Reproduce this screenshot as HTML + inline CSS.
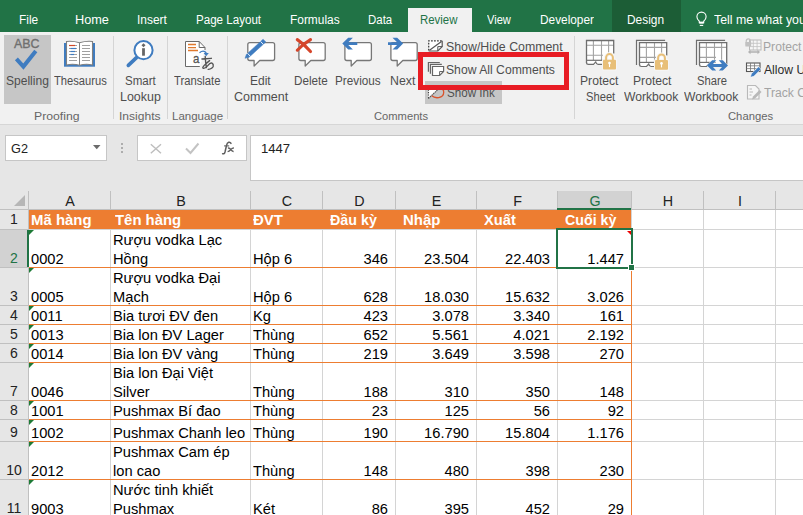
<!DOCTYPE html>
<html><head><meta charset="utf-8"><style>
html,body{margin:0;padding:0}
body{width:803px;height:515px;overflow:hidden;position:relative;background:#fff;font-family:"Liberation Sans",sans-serif}
.t{position:absolute;white-space:nowrap}
.r{position:absolute;box-sizing:content-box}
</style></head><body>
<div class="r" style="left:0px;top:0px;width:803px;height:32px;background:#217346;"></div>
<div class="r" style="left:612px;top:0px;width:69px;height:32px;background:#1c5d36;"></div>
<div class="r" style="left:408px;top:8px;width:64px;height:24px;background:#f1f1f1;"></div>
<div class="t" style="left:19.45px;top:12.27px;font-size:12.5px;line-height:16px;color:#ffffff;font-weight:normal;transform:scaleX(0.9535);transform-origin:0 0;">File</div>
<div class="t" style="left:75.48px;top:12.27px;font-size:12.5px;line-height:16px;color:#ffffff;font-weight:normal;transform:scaleX(1.0173);transform-origin:0 0;">Home</div>
<div class="t" style="left:137.13px;top:12.27px;font-size:12.5px;line-height:16px;color:#ffffff;font-weight:normal;transform:scaleX(0.9547);transform-origin:0 0;">Insert</div>
<div class="t" style="left:195.57px;top:12.27px;font-size:12.5px;line-height:16px;color:#ffffff;font-weight:normal;transform:scaleX(0.9273);transform-origin:0 0;">Page Layout</div>
<div class="t" style="left:289.75px;top:12.27px;font-size:12.5px;line-height:16px;color:#ffffff;font-weight:normal;transform:scaleX(0.9529);transform-origin:0 0;">Formulas</div>
<div class="t" style="left:367.68px;top:12.27px;font-size:12.5px;line-height:16px;color:#ffffff;font-weight:normal;transform:scaleX(0.9182);transform-origin:0 0;">Data</div>
<div class="t" style="left:487.14px;top:12.27px;font-size:12.5px;line-height:16px;color:#ffffff;font-weight:normal;transform:scaleX(0.8876);transform-origin:0 0;">View</div>
<div class="t" style="left:540.25px;top:12.27px;font-size:12.5px;line-height:16px;color:#ffffff;font-weight:normal;transform:scaleX(0.9471);transform-origin:0 0;">Developer</div>
<div class="t" style="left:627.45px;top:12.27px;font-size:12.5px;line-height:16px;color:#ffffff;font-weight:normal;transform:scaleX(0.9524);transform-origin:0 0;">Design</div>
<div class="t" style="left:420.49px;top:12.17px;font-size:12.5px;line-height:16px;color:#217346;font-weight:normal;transform:scaleX(0.9125);transform-origin:0 0;">Review</div>
<div class="t" style="left:713.55px;top:12.17px;font-size:12.5px;line-height:16px;color:#ffffff;font-weight:normal;transform:scaleX(0.9859);transform-origin:0 0;">Tell me what you</div>
<div class="r" style="left:0px;top:32px;width:803px;height:93px;background:#f1f1f1;"></div>
<div class="r" style="left:0px;top:124px;width:803px;height:1px;background:#d6d6d6;"></div>
<div class="r" style="left:113px;top:36px;width:1px;height:83px;background:#d5d5d5;"></div>
<div class="r" style="left:167px;top:36px;width:1px;height:83px;background:#d5d5d5;"></div>
<div class="r" style="left:227px;top:36px;width:1px;height:83px;background:#d5d5d5;"></div>
<div class="r" style="left:574px;top:36px;width:1px;height:83px;background:#d5d5d5;"></div>
<div class="r" style="left:4px;top:35px;width:47px;height:69px;background:#c6c6c6;"></div>
<div class="r" style="left:425px;top:81px;width:77px;height:23px;background:#c6c6c6;"></div>
<div class="t" style="left:5.56px;top:72.67px;font-size:12.5px;line-height:16px;color:#4e4e4e;font-weight:normal;transform:scaleX(0.9637);transform-origin:0 0;">Spelling</div>
<div class="t" style="left:53.58px;top:72.67px;font-size:12.5px;line-height:16px;color:#4e4e4e;font-weight:normal;transform:scaleX(0.8942);transform-origin:0 0;">Thesaurus</div>
<div class="t" style="left:124.78px;top:72.67px;font-size:12.5px;line-height:16px;color:#4e4e4e;font-weight:normal;transform:scaleX(0.9239);transform-origin:0 0;">Smart</div>
<div class="t" style="left:119.51px;top:88.67px;font-size:12.5px;line-height:16px;color:#4e4e4e;font-weight:normal;transform:scaleX(0.9949);transform-origin:0 0;">Lookup</div>
<div class="t" style="left:174.28px;top:72.67px;font-size:12.5px;line-height:16px;color:#4e4e4e;font-weight:normal;transform:scaleX(0.8994);transform-origin:0 0;">Translate</div>
<div class="t" style="left:250.44px;top:72.67px;font-size:12.5px;line-height:16px;color:#4e4e4e;font-weight:normal;transform:scaleX(0.9590);transform-origin:0 0;">Edit</div>
<div class="t" style="left:233.57px;top:88.67px;font-size:12.5px;line-height:16px;color:#4e4e4e;font-weight:normal;transform:scaleX(1.0012);transform-origin:0 0;">Comment</div>
<div class="t" style="left:294.47px;top:72.67px;font-size:12.5px;line-height:16px;color:#4e4e4e;font-weight:normal;transform:scaleX(0.9345);transform-origin:0 0;">Delete</div>
<div class="t" style="left:334.56px;top:72.67px;font-size:12.5px;line-height:16px;color:#4e4e4e;font-weight:normal;transform:scaleX(0.9388);transform-origin:0 0;">Previous</div>
<div class="t" style="left:390.41px;top:72.67px;font-size:12.5px;line-height:16px;color:#4e4e4e;font-weight:normal;transform:scaleX(0.9868);transform-origin:0 0;">Next</div>
<div class="t" style="left:446.44px;top:38.67px;font-size:12.5px;line-height:16px;color:#4e4e4e;font-weight:normal;transform:scaleX(0.9878);transform-origin:0 0;">Show/Hide Comment</div>
<div class="t" style="left:446.45px;top:61.67px;font-size:12.5px;line-height:16px;color:#4e4e4e;font-weight:normal;transform:scaleX(0.9741);transform-origin:0 0;">Show All Comments</div>
<div class="t" style="left:446.88px;top:84.67px;font-size:12.5px;line-height:16px;color:#505050;font-weight:normal;transform:scaleX(0.9297);transform-origin:0 0;">Show Ink</div>
<div class="t" style="left:580.43px;top:72.67px;font-size:12.5px;line-height:16px;color:#4e4e4e;font-weight:normal;transform:scaleX(0.9714);transform-origin:0 0;">Protect</div>
<div class="t" style="left:585.70px;top:88.67px;font-size:12.5px;line-height:16px;color:#4e4e4e;font-weight:normal;transform:scaleX(0.8937);transform-origin:0 0;">Sheet</div>
<div class="t" style="left:632.63px;top:72.67px;font-size:12.5px;line-height:16px;color:#4e4e4e;font-weight:normal;transform:scaleX(0.9714);transform-origin:0 0;">Protect</div>
<div class="t" style="left:624.34px;top:88.67px;font-size:12.5px;line-height:16px;color:#4e4e4e;font-weight:normal;transform:scaleX(0.9714);transform-origin:0 0;">Workbook</div>
<div class="t" style="left:696.89px;top:72.67px;font-size:12.5px;line-height:16px;color:#4e4e4e;font-weight:normal;transform:scaleX(0.8979);transform-origin:0 0;">Share</div>
<div class="t" style="left:684.44px;top:88.67px;font-size:12.5px;line-height:16px;color:#4e4e4e;font-weight:normal;transform:scaleX(0.9714);transform-origin:0 0;">Workbook</div>
<div class="t" style="left:763.43px;top:38.67px;font-size:12.5px;line-height:16px;color:#a3a3a3;font-weight:normal;transform:scaleX(0.9714);transform-origin:0 0;">Protect and Share Workbook</div>
<div class="t" style="left:764.40px;top:61.67px;font-size:12.5px;line-height:16px;color:#2b2b2b;font-weight:normal;transform:scaleX(0.9714);transform-origin:0 0;">Allow Users to Edit Ranges</div>
<div class="t" style="left:764.16px;top:84.67px;font-size:12.5px;line-height:16px;color:#a3a3a3;font-weight:normal;transform:scaleX(0.9714);transform-origin:0 0;">Track Changes</div>
<div class="t" style="left:33.82px;top:108.52px;font-size:11.5px;line-height:14px;color:#666666;font-weight:normal;transform:scaleX(1.0639);transform-origin:0 0;">Proofing</div>
<div class="t" style="left:118.92px;top:108.52px;font-size:11.5px;line-height:14px;color:#666666;font-weight:normal;transform:scaleX(1.0477);transform-origin:0 0;">Insights</div>
<div class="t" style="left:171.78px;top:108.52px;font-size:11.5px;line-height:14px;color:#666666;font-weight:normal;transform:scaleX(0.9992);transform-origin:0 0;">Language</div>
<div class="t" style="left:373.64px;top:108.52px;font-size:11.5px;line-height:14px;color:#666666;font-weight:normal;transform:scaleX(0.9721);transform-origin:0 0;">Comments</div>
<div class="t" style="left:728.14px;top:108.52px;font-size:11.5px;line-height:14px;color:#666666;font-weight:normal;transform:scaleX(0.9783);transform-origin:0 0;">Changes</div>
<div class="t" style="left:14.25px;top:35.67px;font-size:12.5px;line-height:16px;color:#6f6f6f;font-weight:normal;transform:scaleX(0.9921);transform-origin:0 0;-webkit-text-stroke:0.35px #6f6f6f">ABC</div>
<svg class="r" style="left:0;top:0" width="803" height="124" viewBox="0 0 803 124"><polyline points="16.4,58.9 23.4,66.6 35.8,51.1" fill="none" stroke="#3f7cc0" stroke-width="4"/><rect x="64" y="43" width="31" height="23.7" fill="#3f7cc0"/><path d="M66.5,65 V41.5 Q73,40.8 79.5,42.8 Q86,40.8 92.5,41.5 V65 Q86,63.5 79.5,65.3 Q73,63.5 66.5,65 Z" fill="#fff" stroke="#808080" stroke-width="1.1"/><line x1="79.5" y1="42.8" x2="79.5" y2="65" stroke="#808080" stroke-width="1"/><line x1="69" y1="45.5" x2="77" y2="45.5" stroke="#a0a0a0" stroke-width="1"/><line x1="82" y1="45.5" x2="90" y2="45.5" stroke="#a0a0a0" stroke-width="1"/><line x1="69" y1="48.5" x2="77" y2="48.5" stroke="#a0a0a0" stroke-width="1"/><line x1="82" y1="48.5" x2="90" y2="48.5" stroke="#a0a0a0" stroke-width="1"/><line x1="69" y1="51.5" x2="77" y2="51.5" stroke="#a0a0a0" stroke-width="1"/><line x1="82" y1="51.5" x2="90" y2="51.5" stroke="#a0a0a0" stroke-width="1"/><line x1="69" y1="54.5" x2="77" y2="54.5" stroke="#a0a0a0" stroke-width="1"/><line x1="82" y1="54.5" x2="90" y2="54.5" stroke="#a0a0a0" stroke-width="1"/><line x1="69" y1="57.5" x2="77" y2="57.5" stroke="#a0a0a0" stroke-width="1"/><line x1="82" y1="57.5" x2="90" y2="57.5" stroke="#a0a0a0" stroke-width="1"/><line x1="69" y1="60.5" x2="77" y2="60.5" stroke="#a0a0a0" stroke-width="1"/><line x1="82" y1="60.5" x2="90" y2="60.5" stroke="#a0a0a0" stroke-width="1"/><line x1="69" y1="45.5" x2="75" y2="45.5" stroke="#d24726" stroke-width="1.2"/><line x1="70.5" y1="48.5" x2="76" y2="48.5" stroke="#3f7cc0" stroke-width="1.2"/><line x1="70.5" y1="51.5" x2="75" y2="51.5" stroke="#3f7cc0" stroke-width="1.2"/><line x1="70.5" y1="54.5" x2="74" y2="54.5" stroke="#3f7cc0" stroke-width="1.2"/><line x1="128.3" y1="65.4" x2="136.5" y2="57.6" stroke="#3f7cc0" stroke-width="3.6" stroke-linecap="round"/><circle cx="143.5" cy="50.2" r="9.1" fill="#fff" stroke="#3f7cc0" stroke-width="2"/><rect x="142.1" y="43.8" width="2.8" height="2.8" fill="#666" transform="rotate(45 143.5 45.2)"/><rect x="142.1" y="48.2" width="2.8" height="7.5" fill="#666"/><path d="M199.8,66.5 H185.5 V41.5 H199.2 L205,47.5 V50" fill="#fff" stroke="#6a6a6a" stroke-width="1"/><path d="M199.2,41.5 V47.5 H205" fill="none" stroke="#6a6a6a" stroke-width="1"/><path d="M188,44.5 H196 M188,47.6 H196 M188,50.5 H198" stroke="#e07a2e" stroke-width="1.3"/><path d="M199.5,52.8 Q203.5,49.5 206.3,53" fill="none" stroke="#3f7cc0" stroke-width="1.3"/><path d="M203.6,53.1 H208.8 L206.2,56.2 Z" fill="#3f7cc0"/><path d="M201.9,59 L211.4,58.3 M205.2,56.4 Q205.5,62 206.4,67.6 M209.6,60.6 Q206.5,63 204,65.6 Q201.9,68 203.3,68.4 Q205.3,68.8 208,65.3 Q210.2,62.4 212,63.1 Q213.7,64 213.2,66.4 Q212.5,68.7 208.2,69.4" fill="none" stroke="#555" stroke-width="1.35" stroke-linecap="round"/><path d="M259.70000000000005,60.5 H272.6 Q274.6,60.5 274.6,58.5 V44.6 Q274.6,42.6 272.6,42.6 H249.8 Q247.8,42.6 247.8,44.6 V58.5 Q247.8,60.5 249.8,60.5 H254.10000000000002 V66 Z" fill="#fff" stroke="#777777" stroke-width="1.3" stroke-linejoin="round"/><path d="M245.0,58.3 L246.4,54.4 L263.1,39.2 L265.8,42.0 L249.1,57.2 Z" fill="#3f7cc0" stroke="#3f7cc0" stroke-width="0.5" stroke-linejoin="round"/><path d="M247.5,53.3 L250.3,56.3 M260.6,41.5 L263.4,44.5" stroke="#fff" stroke-width="0.9"/><path d="M310.8,60.5 H323.2 Q325.2,60.5 325.2,58.5 V44.6 Q325.2,42.6 323.2,42.6 H300.9 Q298.9,42.6 298.9,44.6 V58.5 Q298.9,60.5 300.9,60.5 H305.2 V66 Z" fill="#fff" stroke="#777777" stroke-width="1.3" stroke-linejoin="round"/><path d="M297.3,39.6 Q304,44 310.5,51.5 M297.3,50.2 Q303,44 310.5,39.6" fill="none" stroke="#d5452a" stroke-width="3.1" stroke-linecap="round"/><path d="M356.8,60.5 H369.4 Q371.4,60.5 371.4,58.5 V44.6 Q371.4,42.6 369.4,42.6 H346.9 Q344.9,42.6 344.9,44.6 V58.5 Q344.9,60.5 346.9,60.5 H351.2 V66 Z" fill="#fff" stroke="#777777" stroke-width="1.3" stroke-linejoin="round"/><path d="M342.3,43.6 L348.2,37.7 H352.9 L348.3,42.3 H357.3 V44.9 H348.3 L352.9,49.5 H348.2 Z" fill="#3f7cc0"/><path d="M402.8,60.5 H415.2 Q417.2,60.5 417.2,58.5 V44.6 Q417.2,42.6 415.2,42.6 H392.9 Q390.9,42.6 390.9,44.6 V58.5 Q390.9,60.5 392.9,60.5 H397.2 V66 Z" fill="#fff" stroke="#777777" stroke-width="1.3" stroke-linejoin="round"/><path d="M403.1,43.6 L397.2,37.7 H392.5 L397.1,42.3 H388 V44.9 H397.1 L392.5,49.5 H397.2 Z" fill="#3f7cc0"/><path d="M428.7,51 V40.8 H442.2 V46.6 L437.8,51 Z" fill="#fff"/><path d="M428.7,50.5 V40.8 H442" fill="none" stroke="#444" stroke-width="1.3" stroke-dasharray="1.8,1.2"/><path d="M428.7,51 H437.8 L442.2,46.6 V40.8" fill="none" stroke="#555" stroke-width="1.2"/><path d="M429.5,50.3 L441.5,41.5" stroke="#555" stroke-width="1.2"/><path d="M437.8,51 V46.6 H442.2" fill="none" stroke="#555" stroke-width="1"/><path d="M428.4,71.8 V62.5 H439.8 M430.4,73.7 V64.4 H441.8" fill="none" stroke="#666" stroke-width="1.2"/><path d="M432.5,75.5 V66.5 H443.6 V71.5 L439.6,75.5 Z" fill="#fff" stroke="#666" stroke-width="1.2"/><path d="M439.6,75.5 V71.5 H443.6" fill="none" stroke="#666" stroke-width="1"/><path d="M428.5,98.5 L438,89.5 H428.5 Z" fill="#fff"/><path d="M428.5,98 V89.5" stroke="#444" stroke-width="1.1" stroke-dasharray="1.1,1.3"/><path d="M428.3,98.6 L438.5,89" stroke="#555" stroke-width="1.1" stroke-dasharray="1.6,0.6"/><path d="M431.8,95.8 Q434.5,98.3 438.8,97.6 Q443.6,96.6 443.7,92.5 Q443.8,88.5 440,88" fill="none" stroke="#d9542c" stroke-width="1.3"/><rect x="586.5" y="40.5" width="27.2" height="24" fill="#fff"/><path d="M586.5,45.3 H613.7 M586.5,55.3 H603.0 M593.4,40.5 V60.3 M601.5,40.5 V60.3 M608.6,40.5 V53.5" stroke="#a3a3a3" stroke-width="1.1"/><path d="M586.5,60.3 H602.5" stroke="#6e6e6e" stroke-width="1.2"/><path d="M586.5,63.0 V40.5 H613.7 V53.5" fill="none" stroke="#6e6e6e" stroke-width="1.3"/><path d="M586.5,62.5 Q586.5,64.4 588.5,64.4 H593.5 L595.7,61.9 Q596.3,64.4 598.0,64.4 H602.5" fill="none" stroke="#6e6e6e" stroke-width="1.2"/><path d="M606.1,60.8 V57.5 A3.4,3.4 0 0 1 612.9,57.5 V60.8" fill="none" stroke="#f6f6f6" stroke-width="4"/><rect x="602" y="58.8" width="15.0" height="11.6" rx="1.5" fill="#f6f6f6"/><path d="M606.1,60.8 V57.5 A3.4,3.4 0 0 1 612.9,57.5 V60.8" fill="none" stroke="#e8bf78" stroke-width="2"/><rect x="603" y="59.8" width="13.0" height="9.6" rx="1" fill="#e8bf78"/><circle cx="609.5" cy="63.099999999999994" r="1.35" fill="#fff"/><rect x="608.95" y="63.3" width="1.1" height="3.8" fill="#fff"/><path d="M636.5,64.9 V40.4 H665.1" fill="none" stroke="#6e6e6e" stroke-width="1.2"/><rect x="639.5" y="42.6" width="27.2" height="24" fill="#fff"/><path d="M639.5,47.4 H666.7 M639.5,57.400000000000006 H656.0 M646.4,42.6 V62.400000000000006 M654.5,42.6 V62.400000000000006 M661.6,42.6 V55.6" stroke="#a3a3a3" stroke-width="1.1"/><path d="M639.5,62.400000000000006 H655.5" stroke="#6e6e6e" stroke-width="1.2"/><path d="M639.5,65.1 V42.6 H666.7 V55.6" fill="none" stroke="#6e6e6e" stroke-width="1.3"/><path d="M639.5,64.6 Q639.5,66.5 641.5,66.5 H646.5 L648.7,64.0 Q649.3,66.5 651.0,66.5 H655.5" fill="none" stroke="#6e6e6e" stroke-width="1.2"/><path d="M658.1,61.1 V57.800000000000004 A3.4,3.4 0 0 1 664.9,57.800000000000004 V61.1" fill="none" stroke="#f6f6f6" stroke-width="4"/><rect x="654" y="59.1" width="15.0" height="11.6" rx="1.5" fill="#f6f6f6"/><path d="M658.1,61.1 V57.800000000000004 A3.4,3.4 0 0 1 664.9,57.800000000000004 V61.1" fill="none" stroke="#e8bf78" stroke-width="2"/><rect x="655" y="60.1" width="13.0" height="9.6" rx="1" fill="#e8bf78"/><circle cx="661.5" cy="63.4" r="1.35" fill="#fff"/><rect x="660.95" y="63.6" width="1.1" height="3.8" fill="#fff"/><path d="M696.5,64.9 V40.4 H725.1" fill="none" stroke="#6e6e6e" stroke-width="1.2"/><rect x="699.5" y="42.6" width="27.2" height="24" fill="#fff"/><path d="M699.5,47.4 H726.7 M699.5,57.400000000000006 H716.0 M706.4,42.6 V62.400000000000006 M714.5,42.6 V62.400000000000006 M721.6,42.6 V64.6" stroke="#a3a3a3" stroke-width="1.1"/><path d="M699.5,62.400000000000006 H715.5" stroke="#6e6e6e" stroke-width="1.2"/><path d="M699.5,65.1 V42.6 H726.7 V64.6" fill="none" stroke="#6e6e6e" stroke-width="1.3"/><path d="M699.5,64.6 Q699.5,66.5 701.5,66.5 H706.5 L708.7,64.0 Q709.3,66.5 711.0,66.5 H715.5" fill="none" stroke="#6e6e6e" stroke-width="1.2"/><path d="M707,65.4 L712.2,60.2 H716.2 L713,63.9 H722 L718.8,60.2 H722.8 L728,65.4 L722.8,70.4 H718.8 L722,66.9 H713 L716.2,70.4 H712.2 Z" fill="#3f7cc0" stroke="#f6f6f6" stroke-width="0.8" paint-order="stroke"/><g opacity="0.45"><rect x="749.5" y="40" width="11.5" height="10" fill="#fff" stroke="#777" stroke-width="1"/><path d="M749.5,43.3 H761 M749.5,46.6 H761 M753.3,40 V50 M757.1,40 V50" stroke="#888" stroke-width="0.8"/><path d="M746.2,45.5 V41.5 Q746.2,38.8 748.3,38.8 Q750.4,38.8 750.4,41.5 V45.5" fill="none" stroke="#888" stroke-width="1.2"/><rect x="745.4" y="42" width="5.8" height="4.5" fill="#888"/><path d="M748,52 L750.5,49.7 V51.2 H757.5 V49.7 L760,52 L757.5,54.3 V52.8 H750.5 V54.3 Z" fill="#666"/></g><rect x="746.5" y="63" width="13.5" height="8.5" fill="#fff" stroke="#555" stroke-width="1.1"/><path d="M746.5,65.8 H760 M746.5,68.6 H760 M750.5,63 V71.5 M754.5,63 V71.5" stroke="#777" stroke-width="0.8"/><path d="M750.3,77.3 L751.4,73.8 L758.5,66.7 L761,69.2 L753.9,76.3 Z" fill="#3f7cc0" stroke="#fff" stroke-width="0.6"/><g opacity="0.4"><path d="M747.5,85.5 H755.5 L759,89 V99 H747.5 Z" fill="#fff" stroke="#666" stroke-width="1.1"/><path d="M749.5,89 H752 M749.5,92 H753 M749.5,95 H751.5" stroke="#666" stroke-width="1"/><path d="M752,99.5 L753,96.5 L759.5,90 L761.5,92 L755,98.5 Z" fill="#666"/></g><path d="M699.3,21.2 Q696.9,19.3 696.9,16.7 A4.6,4.6 0 0 1 706.1,16.7 Q706.1,19.3 703.7,21.2 V22.8 H699.3 Z" fill="none" stroke="#fff" stroke-width="1.1"/><rect x="699.3" y="21.6" width="4.4" height="2" fill="#fff"/><path d="M699.8,25.4 H703.2" stroke="#fff" stroke-width="1.1"/></svg>
<div class="t" style="left:193.44px;top:50.02px;font-size:13.5px;line-height:17px;color:#555;font-weight:normal;transform:scaleX(0.8486);transform-origin:0 0;-webkit-text-stroke:0.3px #555">a</div>
<div class="r" style="left:418px;top:52px;width:141px;height:28px;border:5px solid #e81c24;"></div>
<div class="r" style="left:0px;top:125px;width:803px;height:66px;background:#e6e6e6;"></div>
<div class="r" style="left:5px;top:135px;width:100px;height:24px;background:#fff;border:1px solid #c6c6c6"></div>
<div class="t" style="left:11.46px;top:140.67px;font-size:12.5px;line-height:16px;color:#222;font-weight:normal;transform:scaleX(1.0170);transform-origin:0 0;">G2</div>
<svg class="r" style="left:93px;top:145px" width="8" height="5"><path d="M0 0H7.5L3.75 4.2Z" fill="#6b6b6b"/></svg>
<div class="r" style="left:121px;top:142.8px;width:2px;height:2px;background:#9a9a9a;border-radius:1px"></div>
<div class="r" style="left:121px;top:146.8px;width:2px;height:2px;background:#9a9a9a;border-radius:1px"></div>
<div class="r" style="left:121px;top:150.8px;width:2px;height:2px;background:#9a9a9a;border-radius:1px"></div>
<div class="r" style="left:137px;top:135px;width:108px;height:24px;background:#fff;border:1px solid #c6c6c6"></div>
<svg class="r" style="left:0;top:124px" width="803" height="60" viewBox="0 124 803 60"><path d="M150.8,144.2 L161,153.2 M161,144.2 L150.8,153.2" stroke="#bdbdbd" stroke-width="1.4"/><path d="M186,148.5 L190.5,153 L198.5,143.5" stroke="#c3c3c3" stroke-width="2" fill="none"/></svg>
<svg class="r" style="left:0;top:124px" width="803" height="60" viewBox="0 124 803 60"><path d="M231,143.4 Q230.3,141.9 228.7,142.2 Q227.1,142.6 226.5,145.5 L225,152 Q224.4,154.2 222.6,153.7" stroke="#5e5e5e" stroke-width="1.5" fill="none" stroke-linecap="round"/><path d="M224.1,145.9 H229.2" stroke="#5e5e5e" stroke-width="1.1"/><path d="M227.9,148 Q229.8,147.8 230.9,149.7 Q232,151.6 233.6,151.5 M234,147.9 Q232.2,148 230.6,149.8 Q229.1,151.5 227.6,151.7" stroke="#5e5e5e" stroke-width="1.3" fill="none"/></svg>
<div class="r" style="left:250px;top:135px;width:560px;height:44px;background:#fff;border:1px solid #c6c6c6"></div>
<div class="t" style="left:261.32px;top:140.67px;font-size:12.5px;line-height:16px;color:#222;font-weight:normal;transform:scaleX(1.0476);transform-origin:0 0;">1447</div>
<div class="r" style="left:0px;top:191px;width:803px;height:18px;background:#e6e6e6;"></div>
<div class="r" style="left:557px;top:191px;width:74px;height:18px;background:#d2d2d2;"></div>
<div class="r" style="left:0px;top:209px;width:28px;height:306px;background:#e6e6e6;"></div>
<div class="r" style="left:0px;top:230px;width:28px;height:37px;background:#d2d2d2;"></div>
<div class="r" style="left:29px;top:210px;width:803px;height:305px;background:#ffffff;"></div>
<div class="r" style="left:110px;top:209px;width:1px;height:306px;background:#d4d4d4;"></div>
<div class="r" style="left:250px;top:209px;width:1px;height:306px;background:#d4d4d4;"></div>
<div class="r" style="left:322px;top:209px;width:1px;height:306px;background:#d4d4d4;"></div>
<div class="r" style="left:395px;top:209px;width:1px;height:306px;background:#d4d4d4;"></div>
<div class="r" style="left:476px;top:209px;width:1px;height:306px;background:#d4d4d4;"></div>
<div class="r" style="left:557px;top:209px;width:1px;height:306px;background:#d4d4d4;"></div>
<div class="r" style="left:631px;top:209px;width:1px;height:306px;background:#d4d4d4;"></div>
<div class="r" style="left:703px;top:209px;width:1px;height:306px;background:#d4d4d4;"></div>
<div class="r" style="left:775px;top:209px;width:1px;height:306px;background:#d4d4d4;"></div>
<div class="r" style="left:850px;top:209px;width:1px;height:306px;background:#d4d4d4;"></div>
<div class="r" style="left:28px;top:191px;width:1px;height:18px;background:#c0c0c0;"></div>
<div class="r" style="left:110px;top:191px;width:1px;height:18px;background:#c0c0c0;"></div>
<div class="r" style="left:250px;top:191px;width:1px;height:18px;background:#c0c0c0;"></div>
<div class="r" style="left:322px;top:191px;width:1px;height:18px;background:#c0c0c0;"></div>
<div class="r" style="left:395px;top:191px;width:1px;height:18px;background:#c0c0c0;"></div>
<div class="r" style="left:476px;top:191px;width:1px;height:18px;background:#c0c0c0;"></div>
<div class="r" style="left:557px;top:191px;width:1px;height:18px;background:#c0c0c0;"></div>
<div class="r" style="left:631px;top:191px;width:1px;height:18px;background:#c0c0c0;"></div>
<div class="r" style="left:703px;top:191px;width:1px;height:18px;background:#c0c0c0;"></div>
<div class="r" style="left:775px;top:191px;width:1px;height:18px;background:#c0c0c0;"></div>
<div class="r" style="left:850px;top:191px;width:1px;height:18px;background:#c0c0c0;"></div>
<div class="r" style="left:28px;top:191px;width:1px;height:324px;background:#c0c0c0;"></div>
<div class="r" style="left:29px;top:229px;width:803px;height:1px;background:#d4d4d4;"></div>
<div class="r" style="left:29px;top:267px;width:803px;height:1px;background:#d4d4d4;"></div>
<div class="r" style="left:29px;top:305px;width:803px;height:1px;background:#d4d4d4;"></div>
<div class="r" style="left:29px;top:324px;width:803px;height:1px;background:#d4d4d4;"></div>
<div class="r" style="left:29px;top:343px;width:803px;height:1px;background:#d4d4d4;"></div>
<div class="r" style="left:29px;top:362px;width:803px;height:1px;background:#d4d4d4;"></div>
<div class="r" style="left:29px;top:400px;width:803px;height:1px;background:#d4d4d4;"></div>
<div class="r" style="left:29px;top:419px;width:803px;height:1px;background:#d4d4d4;"></div>
<div class="r" style="left:29px;top:441px;width:803px;height:1px;background:#d4d4d4;"></div>
<div class="r" style="left:29px;top:479px;width:803px;height:1px;background:#d4d4d4;"></div>
<div class="r" style="left:29px;top:517px;width:803px;height:1px;background:#d4d4d4;"></div>
<div class="r" style="left:0px;top:209px;width:803px;height:1px;background:#c0c0c0;"></div>
<div class="r" style="left:0px;top:229px;width:28px;height:1px;background:#c0c0c0;"></div>
<div class="r" style="left:0px;top:267px;width:28px;height:1px;background:#c0c0c0;"></div>
<div class="r" style="left:0px;top:305px;width:28px;height:1px;background:#c0c0c0;"></div>
<div class="r" style="left:0px;top:324px;width:28px;height:1px;background:#c0c0c0;"></div>
<div class="r" style="left:0px;top:343px;width:28px;height:1px;background:#c0c0c0;"></div>
<div class="r" style="left:0px;top:362px;width:28px;height:1px;background:#c0c0c0;"></div>
<div class="r" style="left:0px;top:400px;width:28px;height:1px;background:#c0c0c0;"></div>
<div class="r" style="left:0px;top:419px;width:28px;height:1px;background:#c0c0c0;"></div>
<div class="r" style="left:0px;top:441px;width:28px;height:1px;background:#c0c0c0;"></div>
<div class="r" style="left:0px;top:479px;width:28px;height:1px;background:#c0c0c0;"></div>
<div class="r" style="left:0px;top:517px;width:28px;height:1px;background:#c0c0c0;"></div>
<div class="r" style="left:557px;top:208px;width:74px;height:2px;background:#217346;"></div>
<div class="r" style="left:27px;top:230px;width:2px;height:37px;background:#217346;"></div>
<svg class="r" style="left:14px;top:195px" width="12" height="12"><path d="M11 0V11H0Z" fill="#b6b6b6"/></svg>
<div class="t" style="left:29px;width:82px;top:192px;line-height:19px;text-align:center;font-size:14.3px;color:#222">A</div>
<div class="t" style="left:111px;width:140px;top:192px;line-height:19px;text-align:center;font-size:14.3px;color:#222">B</div>
<div class="t" style="left:251px;width:72px;top:192px;line-height:19px;text-align:center;font-size:14.3px;color:#222">C</div>
<div class="t" style="left:323px;width:73px;top:192px;line-height:19px;text-align:center;font-size:14.3px;color:#222">D</div>
<div class="t" style="left:396px;width:81px;top:192px;line-height:19px;text-align:center;font-size:14.3px;color:#222">E</div>
<div class="t" style="left:477px;width:81px;top:192px;line-height:19px;text-align:center;font-size:14.3px;color:#222">F</div>
<div class="t" style="left:558px;width:74px;top:192px;line-height:19px;text-align:center;font-size:14.3px;color:#217346">G</div>
<div class="t" style="left:632px;width:72px;top:192px;line-height:19px;text-align:center;font-size:14.3px;color:#222">H</div>
<div class="t" style="left:704px;width:72px;top:192px;line-height:19px;text-align:center;font-size:14.3px;color:#222">I</div>
<div class="t" style="left:776px;width:75px;top:192px;line-height:19px;text-align:center;font-size:14.3px;color:#222">J</div>
<div class="t" style="left:0px;width:28px;top:210px;line-height:19px;text-align:center;font-size:14px;color:#222">1</div>
<div class="t" style="left:0px;width:28px;top:249px;line-height:19px;text-align:center;font-size:14px;color:#217346">2</div>
<div class="t" style="left:0px;width:28px;top:287px;line-height:19px;text-align:center;font-size:14px;color:#222">3</div>
<div class="t" style="left:0px;width:28px;top:306px;line-height:19px;text-align:center;font-size:14px;color:#222">4</div>
<div class="t" style="left:0px;width:28px;top:325px;line-height:19px;text-align:center;font-size:14px;color:#222">5</div>
<div class="t" style="left:0px;width:28px;top:344px;line-height:19px;text-align:center;font-size:14px;color:#222">6</div>
<div class="t" style="left:0px;width:28px;top:382px;line-height:19px;text-align:center;font-size:14px;color:#222">7</div>
<div class="t" style="left:0px;width:28px;top:401px;line-height:19px;text-align:center;font-size:14px;color:#222">8</div>
<div class="t" style="left:0px;width:28px;top:423px;line-height:19px;text-align:center;font-size:14px;color:#222">9</div>
<div class="t" style="left:0px;width:28px;top:461px;line-height:19px;text-align:center;font-size:14px;color:#222">10</div>
<div class="t" style="left:0px;width:28px;top:499px;line-height:19px;text-align:center;font-size:14px;color:#222">11</div>
<div class="r" style="left:29px;top:210px;width:602px;height:19px;background:#ed7d31;"></div>
<div class="t" style="left:30.63px;top:210.13px;font-size:15.5px;line-height:19px;color:#fff;font-weight:bold;transform:scaleX(0.9632);transform-origin:0 0;">Mã hàng</div>
<div class="t" style="left:114.55px;top:210.13px;font-size:15.5px;line-height:19px;color:#fff;font-weight:bold;transform:scaleX(0.9611);transform-origin:0 0;">Tên hàng</div>
<div class="t" style="left:253.13px;top:210.13px;font-size:15.5px;line-height:19px;color:#fff;font-weight:bold;transform:scaleX(0.9653);transform-origin:0 0;">ĐVT</div>
<div class="t" style="left:329.73px;top:210.13px;font-size:15.5px;line-height:19px;color:#fff;font-weight:bold;transform:scaleX(0.9214);transform-origin:0 0;">Đầu kỳ</div>
<div class="t" style="left:402.53px;top:210.13px;font-size:15.5px;line-height:19px;color:#fff;font-weight:bold;transform:scaleX(0.9644);transform-origin:0 0;">Nhập</div>
<div class="t" style="left:484.35px;top:210.13px;font-size:15.5px;line-height:19px;color:#fff;font-weight:bold;transform:scaleX(0.9474);transform-origin:0 0;">Xuất</div>
<div class="t" style="left:565.03px;top:210.13px;font-size:15.5px;line-height:19px;color:#fff;font-weight:bold;transform:scaleX(0.9175);transform-origin:0 0;">Cuối kỳ</div>
<div class="r" style="left:29px;top:267px;width:602px;height:1px;background:#ed7d31;"></div>
<div class="r" style="left:29px;top:305px;width:602px;height:1px;background:#ed7d31;"></div>
<div class="r" style="left:29px;top:324px;width:602px;height:1px;background:#ed7d31;"></div>
<div class="r" style="left:29px;top:343px;width:602px;height:1px;background:#ed7d31;"></div>
<div class="r" style="left:29px;top:362px;width:602px;height:1px;background:#ed7d31;"></div>
<div class="r" style="left:29px;top:400px;width:602px;height:1px;background:#ed7d31;"></div>
<div class="r" style="left:29px;top:419px;width:602px;height:1px;background:#ed7d31;"></div>
<div class="r" style="left:29px;top:441px;width:602px;height:1px;background:#ed7d31;"></div>
<div class="r" style="left:29px;top:479px;width:602px;height:1px;background:#ed7d31;"></div>
<div class="r" style="left:29px;top:517px;width:602px;height:1px;background:#ed7d31;"></div>
<div class="r" style="left:631px;top:229px;width:1px;height:290px;background:#ed7d31;"></div>
<div class="t" style="left:30.50px;top:249.13px;font-size:15.5px;line-height:19px;color:#000;transform:scaleX(0.9465);transform-origin:0 0">0002</div>
<div class="t" style="left:113.00px;top:230.13px;font-size:15.5px;line-height:19px;color:#000;transform:scaleX(0.9465);transform-origin:0 0">Rượu vodka Lạc</div>
<div class="t" style="left:113.00px;top:249.13px;font-size:15.5px;line-height:19px;color:#000;transform:scaleX(0.9465);transform-origin:0 0">Hồng</div>
<div class="t" style="left:252.50px;top:249.13px;font-size:15.5px;line-height:19px;color:#000;transform:scaleX(0.9465);transform-origin:0 0">Hộp 6</div>
<div class="t" style="left:302px;width:86px;text-align:right;top:249.13px;font-size:15.5px;line-height:19px;color:#000;transform:scaleX(0.9465);transform-origin:100% 0">346</div>
<div class="t" style="left:375px;width:94px;text-align:right;top:249.13px;font-size:15.5px;line-height:19px;color:#000;transform:scaleX(0.9465);transform-origin:100% 0">23.504</div>
<div class="t" style="left:456px;width:94px;text-align:right;top:249.13px;font-size:15.5px;line-height:19px;color:#000;transform:scaleX(0.9465);transform-origin:100% 0">22.403</div>
<div class="t" style="left:537px;width:87px;text-align:right;top:249.13px;font-size:15.5px;line-height:19px;color:#000;transform:scaleX(0.9465);transform-origin:100% 0">1.447</div>
<svg class="r" style="left:29px;top:230px" width="5" height="5"><path d="M0 0H5L0 5Z" fill="#1d7a36"/></svg>
<div class="t" style="left:30.50px;top:287.13px;font-size:15.5px;line-height:19px;color:#000;transform:scaleX(0.9465);transform-origin:0 0">0005</div>
<div class="t" style="left:113.00px;top:268.13px;font-size:15.5px;line-height:19px;color:#000;transform:scaleX(0.9465);transform-origin:0 0">Rượu vodka Đại</div>
<div class="t" style="left:113.00px;top:287.13px;font-size:15.5px;line-height:19px;color:#000;transform:scaleX(0.9465);transform-origin:0 0">Mạch</div>
<div class="t" style="left:252.50px;top:287.13px;font-size:15.5px;line-height:19px;color:#000;transform:scaleX(0.9465);transform-origin:0 0">Hộp 6</div>
<div class="t" style="left:302px;width:86px;text-align:right;top:287.13px;font-size:15.5px;line-height:19px;color:#000;transform:scaleX(0.9465);transform-origin:100% 0">628</div>
<div class="t" style="left:375px;width:94px;text-align:right;top:287.13px;font-size:15.5px;line-height:19px;color:#000;transform:scaleX(0.9465);transform-origin:100% 0">18.030</div>
<div class="t" style="left:456px;width:94px;text-align:right;top:287.13px;font-size:15.5px;line-height:19px;color:#000;transform:scaleX(0.9465);transform-origin:100% 0">15.632</div>
<div class="t" style="left:537px;width:87px;text-align:right;top:287.13px;font-size:15.5px;line-height:19px;color:#000;transform:scaleX(0.9465);transform-origin:100% 0">3.026</div>
<svg class="r" style="left:29px;top:268px" width="5" height="5"><path d="M0 0H5L0 5Z" fill="#1d7a36"/></svg>
<div class="t" style="left:30.50px;top:306.13px;font-size:15.5px;line-height:19px;color:#000;transform:scaleX(0.9465);transform-origin:0 0">0011</div>
<div class="t" style="left:113.00px;top:306.13px;font-size:15.5px;line-height:19px;color:#000;transform:scaleX(0.9465);transform-origin:0 0">Bia tươi ĐV đen</div>
<div class="t" style="left:252.50px;top:306.13px;font-size:15.5px;line-height:19px;color:#000;transform:scaleX(0.9465);transform-origin:0 0">Kg</div>
<div class="t" style="left:302px;width:86px;text-align:right;top:306.13px;font-size:15.5px;line-height:19px;color:#000;transform:scaleX(0.9465);transform-origin:100% 0">423</div>
<div class="t" style="left:375px;width:94px;text-align:right;top:306.13px;font-size:15.5px;line-height:19px;color:#000;transform:scaleX(0.9465);transform-origin:100% 0">3.078</div>
<div class="t" style="left:456px;width:94px;text-align:right;top:306.13px;font-size:15.5px;line-height:19px;color:#000;transform:scaleX(0.9465);transform-origin:100% 0">3.340</div>
<div class="t" style="left:537px;width:87px;text-align:right;top:306.13px;font-size:15.5px;line-height:19px;color:#000;transform:scaleX(0.9465);transform-origin:100% 0">161</div>
<svg class="r" style="left:29px;top:306px" width="5" height="5"><path d="M0 0H5L0 5Z" fill="#1d7a36"/></svg>
<div class="t" style="left:30.50px;top:325.13px;font-size:15.5px;line-height:19px;color:#000;transform:scaleX(0.9465);transform-origin:0 0">0013</div>
<div class="t" style="left:113.00px;top:325.13px;font-size:15.5px;line-height:19px;color:#000;transform:scaleX(0.9465);transform-origin:0 0">Bia lon ĐV Lager</div>
<div class="t" style="left:252.50px;top:325.13px;font-size:15.5px;line-height:19px;color:#000;transform:scaleX(0.9465);transform-origin:0 0">Thùng</div>
<div class="t" style="left:302px;width:86px;text-align:right;top:325.13px;font-size:15.5px;line-height:19px;color:#000;transform:scaleX(0.9465);transform-origin:100% 0">652</div>
<div class="t" style="left:375px;width:94px;text-align:right;top:325.13px;font-size:15.5px;line-height:19px;color:#000;transform:scaleX(0.9465);transform-origin:100% 0">5.561</div>
<div class="t" style="left:456px;width:94px;text-align:right;top:325.13px;font-size:15.5px;line-height:19px;color:#000;transform:scaleX(0.9465);transform-origin:100% 0">4.021</div>
<div class="t" style="left:537px;width:87px;text-align:right;top:325.13px;font-size:15.5px;line-height:19px;color:#000;transform:scaleX(0.9465);transform-origin:100% 0">2.192</div>
<svg class="r" style="left:29px;top:325px" width="5" height="5"><path d="M0 0H5L0 5Z" fill="#1d7a36"/></svg>
<div class="t" style="left:30.50px;top:344.13px;font-size:15.5px;line-height:19px;color:#000;transform:scaleX(0.9465);transform-origin:0 0">0014</div>
<div class="t" style="left:113.00px;top:344.13px;font-size:15.5px;line-height:19px;color:#000;transform:scaleX(0.9465);transform-origin:0 0">Bia lon ĐV vàng</div>
<div class="t" style="left:252.50px;top:344.13px;font-size:15.5px;line-height:19px;color:#000;transform:scaleX(0.9465);transform-origin:0 0">Thùng</div>
<div class="t" style="left:302px;width:86px;text-align:right;top:344.13px;font-size:15.5px;line-height:19px;color:#000;transform:scaleX(0.9465);transform-origin:100% 0">219</div>
<div class="t" style="left:375px;width:94px;text-align:right;top:344.13px;font-size:15.5px;line-height:19px;color:#000;transform:scaleX(0.9465);transform-origin:100% 0">3.649</div>
<div class="t" style="left:456px;width:94px;text-align:right;top:344.13px;font-size:15.5px;line-height:19px;color:#000;transform:scaleX(0.9465);transform-origin:100% 0">3.598</div>
<div class="t" style="left:537px;width:87px;text-align:right;top:344.13px;font-size:15.5px;line-height:19px;color:#000;transform:scaleX(0.9465);transform-origin:100% 0">270</div>
<svg class="r" style="left:29px;top:344px" width="5" height="5"><path d="M0 0H5L0 5Z" fill="#1d7a36"/></svg>
<div class="t" style="left:30.50px;top:382.13px;font-size:15.5px;line-height:19px;color:#000;transform:scaleX(0.9465);transform-origin:0 0">0046</div>
<div class="t" style="left:113.00px;top:363.13px;font-size:15.5px;line-height:19px;color:#000;transform:scaleX(0.9465);transform-origin:0 0">Bia lon Đại Việt</div>
<div class="t" style="left:113.00px;top:382.13px;font-size:15.5px;line-height:19px;color:#000;transform:scaleX(0.9465);transform-origin:0 0">Silver</div>
<div class="t" style="left:252.50px;top:382.13px;font-size:15.5px;line-height:19px;color:#000;transform:scaleX(0.9465);transform-origin:0 0">Thùng</div>
<div class="t" style="left:302px;width:86px;text-align:right;top:382.13px;font-size:15.5px;line-height:19px;color:#000;transform:scaleX(0.9465);transform-origin:100% 0">188</div>
<div class="t" style="left:375px;width:94px;text-align:right;top:382.13px;font-size:15.5px;line-height:19px;color:#000;transform:scaleX(0.9465);transform-origin:100% 0">310</div>
<div class="t" style="left:456px;width:94px;text-align:right;top:382.13px;font-size:15.5px;line-height:19px;color:#000;transform:scaleX(0.9465);transform-origin:100% 0">350</div>
<div class="t" style="left:537px;width:87px;text-align:right;top:382.13px;font-size:15.5px;line-height:19px;color:#000;transform:scaleX(0.9465);transform-origin:100% 0">148</div>
<svg class="r" style="left:29px;top:363px" width="5" height="5"><path d="M0 0H5L0 5Z" fill="#1d7a36"/></svg>
<div class="t" style="left:30.50px;top:401.13px;font-size:15.5px;line-height:19px;color:#000;transform:scaleX(0.9465);transform-origin:0 0">1001</div>
<div class="t" style="left:113.00px;top:401.13px;font-size:15.5px;line-height:19px;color:#000;transform:scaleX(0.9465);transform-origin:0 0">Pushmax Bí đao</div>
<div class="t" style="left:252.50px;top:401.13px;font-size:15.5px;line-height:19px;color:#000;transform:scaleX(0.9465);transform-origin:0 0">Thùng</div>
<div class="t" style="left:302px;width:86px;text-align:right;top:401.13px;font-size:15.5px;line-height:19px;color:#000;transform:scaleX(0.9465);transform-origin:100% 0">23</div>
<div class="t" style="left:375px;width:94px;text-align:right;top:401.13px;font-size:15.5px;line-height:19px;color:#000;transform:scaleX(0.9465);transform-origin:100% 0">125</div>
<div class="t" style="left:456px;width:94px;text-align:right;top:401.13px;font-size:15.5px;line-height:19px;color:#000;transform:scaleX(0.9465);transform-origin:100% 0">56</div>
<div class="t" style="left:537px;width:87px;text-align:right;top:401.13px;font-size:15.5px;line-height:19px;color:#000;transform:scaleX(0.9465);transform-origin:100% 0">92</div>
<svg class="r" style="left:29px;top:401px" width="5" height="5"><path d="M0 0H5L0 5Z" fill="#1d7a36"/></svg>
<div class="t" style="left:30.50px;top:423.13px;font-size:15.5px;line-height:19px;color:#000;transform:scaleX(0.9465);transform-origin:0 0">1002</div>
<div class="t" style="left:113.00px;top:423.13px;font-size:15.5px;line-height:19px;color:#000;transform:scaleX(0.9465);transform-origin:0 0">Pushmax Chanh leo</div>
<div class="t" style="left:252.50px;top:423.13px;font-size:15.5px;line-height:19px;color:#000;transform:scaleX(0.9465);transform-origin:0 0">Thùng</div>
<div class="t" style="left:302px;width:86px;text-align:right;top:423.13px;font-size:15.5px;line-height:19px;color:#000;transform:scaleX(0.9465);transform-origin:100% 0">190</div>
<div class="t" style="left:375px;width:94px;text-align:right;top:423.13px;font-size:15.5px;line-height:19px;color:#000;transform:scaleX(0.9465);transform-origin:100% 0">16.790</div>
<div class="t" style="left:456px;width:94px;text-align:right;top:423.13px;font-size:15.5px;line-height:19px;color:#000;transform:scaleX(0.9465);transform-origin:100% 0">15.804</div>
<div class="t" style="left:537px;width:87px;text-align:right;top:423.13px;font-size:15.5px;line-height:19px;color:#000;transform:scaleX(0.9465);transform-origin:100% 0">1.176</div>
<svg class="r" style="left:29px;top:420px" width="5" height="5"><path d="M0 0H5L0 5Z" fill="#1d7a36"/></svg>
<div class="t" style="left:30.50px;top:461.13px;font-size:15.5px;line-height:19px;color:#000;transform:scaleX(0.9465);transform-origin:0 0">2012</div>
<div class="t" style="left:113.00px;top:442.13px;font-size:15.5px;line-height:19px;color:#000;transform:scaleX(0.9465);transform-origin:0 0">Pushmax Cam ép</div>
<div class="t" style="left:113.00px;top:461.13px;font-size:15.5px;line-height:19px;color:#000;transform:scaleX(0.9465);transform-origin:0 0">lon cao</div>
<div class="t" style="left:252.50px;top:461.13px;font-size:15.5px;line-height:19px;color:#000;transform:scaleX(0.9465);transform-origin:0 0">Thùng</div>
<div class="t" style="left:302px;width:86px;text-align:right;top:461.13px;font-size:15.5px;line-height:19px;color:#000;transform:scaleX(0.9465);transform-origin:100% 0">148</div>
<div class="t" style="left:375px;width:94px;text-align:right;top:461.13px;font-size:15.5px;line-height:19px;color:#000;transform:scaleX(0.9465);transform-origin:100% 0">480</div>
<div class="t" style="left:456px;width:94px;text-align:right;top:461.13px;font-size:15.5px;line-height:19px;color:#000;transform:scaleX(0.9465);transform-origin:100% 0">398</div>
<div class="t" style="left:537px;width:87px;text-align:right;top:461.13px;font-size:15.5px;line-height:19px;color:#000;transform:scaleX(0.9465);transform-origin:100% 0">230</div>
<svg class="r" style="left:29px;top:442px" width="5" height="5"><path d="M0 0H5L0 5Z" fill="#1d7a36"/></svg>
<div class="t" style="left:30.50px;top:499.13px;font-size:15.5px;line-height:19px;color:#000;transform:scaleX(0.9465);transform-origin:0 0">9003</div>
<div class="t" style="left:113.00px;top:480.13px;font-size:15.5px;line-height:19px;color:#000;transform:scaleX(0.9465);transform-origin:0 0">Nước tinh khiết</div>
<div class="t" style="left:113.00px;top:499.13px;font-size:15.5px;line-height:19px;color:#000;transform:scaleX(0.9465);transform-origin:0 0">Pushmax</div>
<div class="t" style="left:252.50px;top:499.13px;font-size:15.5px;line-height:19px;color:#000;transform:scaleX(0.9465);transform-origin:0 0">Két</div>
<div class="t" style="left:302px;width:86px;text-align:right;top:499.13px;font-size:15.5px;line-height:19px;color:#000;transform:scaleX(0.9465);transform-origin:100% 0">86</div>
<div class="t" style="left:375px;width:94px;text-align:right;top:499.13px;font-size:15.5px;line-height:19px;color:#000;transform:scaleX(0.9465);transform-origin:100% 0">395</div>
<div class="t" style="left:456px;width:94px;text-align:right;top:499.13px;font-size:15.5px;line-height:19px;color:#000;transform:scaleX(0.9465);transform-origin:100% 0">452</div>
<div class="t" style="left:537px;width:87px;text-align:right;top:499.13px;font-size:15.5px;line-height:19px;color:#000;transform:scaleX(0.9465);transform-origin:100% 0">29</div>
<svg class="r" style="left:29px;top:480px" width="5" height="5"><path d="M0 0H5L0 5Z" fill="#1d7a36"/></svg>
<div class="r" style="left:556px;top:228px;width:73px;height:37px;border:2px solid #217346"></div>
<div class="r" style="left:628px;top:264px;width:5px;height:5px;background:#217346;border:1px solid #fff;"></div>
<svg class="r" style="left:626.5px;top:230.5px" width="5" height="5"><path d="M0 0H4V4Z" fill="#e00"/></svg>
</body></html>
